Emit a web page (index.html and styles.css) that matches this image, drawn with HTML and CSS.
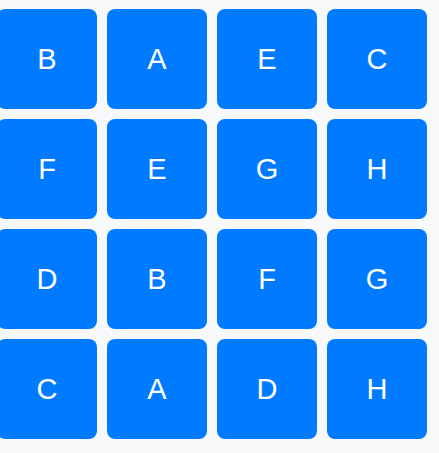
FILE: index.html
```html
<!DOCTYPE html>
<html>
<head>
<meta charset="utf-8">
<link rel="stylesheet" href="styles.css">
</head>
<body>
<div class="grid">
  <div class="tile">B</div>
  <div class="tile">A</div>
  <div class="tile">E</div>
  <div class="tile">C</div>
  <div class="tile">F</div>
  <div class="tile">E</div>
  <div class="tile">G</div>
  <div class="tile">H</div>
  <div class="tile">D</div>
  <div class="tile">B</div>
  <div class="tile">F</div>
  <div class="tile">G</div>
  <div class="tile">C</div>
  <div class="tile">A</div>
  <div class="tile">D</div>
  <div class="tile">H</div>
</div>
</body>
</html>
```
FILE: styles.css
```css
html, body {
  margin: 0;
  padding: 0;
  background: #f8f9fa;
  overflow: hidden;
}
body {
  font-family: "Liberation Sans", Arial, sans-serif;
}
.grid {
  display: grid;
  grid-template-columns: repeat(4, 100px);
  grid-auto-rows: 100px;
  gap: 10px;
  margin: 9px 0 0 -3px;
}
.tile {
  background: #007bff;
  color: #fff;
  border-radius: 8px;
  display: flex;
  align-items: center;
  justify-content: center;
  font-size: 29px;
}
```
